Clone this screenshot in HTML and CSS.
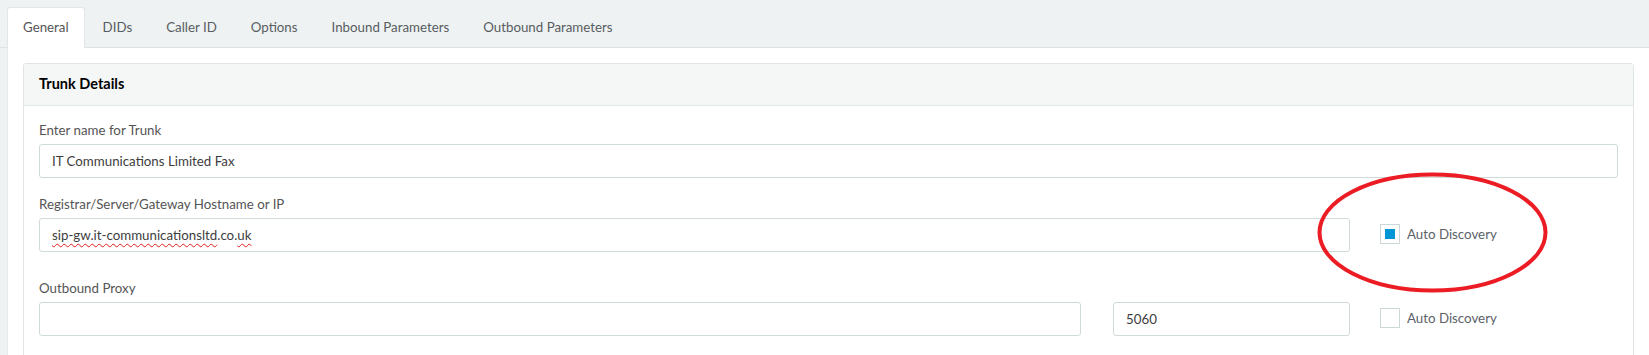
FILE: index.html
```html
<!DOCTYPE html>
<html lang="en">
<head>
<meta charset="utf-8">
<title>Trunk settings</title>
<link rel="stylesheet" href="styles.css">
</head>
<body>
<div class="page">
  <ul class="tabs">
    <li class="tab active">General</li>
    <li class="tab">DIDs</li>
    <li class="tab">Caller ID</li>
    <li class="tab">Options</li>
    <li class="tab">Inbound Parameters</li>
    <li class="tab">Outbound Parameters</li>
  </ul>
  <div class="pane">
    <div class="panel">
      <div class="panel-head">Trunk Details</div>
      <div class="panel-body">
        <div class="group g1">
          <div class="label">Enter name for Trunk</div>
          <div class="input">IT Communications Limited Fax</div>
        </div>
        <div class="row g2">
          <div class="group">
            <div class="label">Registrar/Server/Gateway Hostname or IP</div>
            <div class="input"><span class="misspelt">sip-gw.it-communicationsltd</span>.co.<span class="misspelt">uk</span></div>
          </div>
          <div class="check-wrap">
            <span class="check"><span class="tick"></span></span>
            <span class="check-label">Auto Discovery</span>
          </div>
        </div>
        <div class="row g3">
          <div class="group">
            <div class="label">Outbound Proxy</div>
            <div class="split">
              <div class="input"></div>
              <div class="input">5060</div>
            </div>
          </div>
          <div class="check-wrap">
            <span class="check"></span>
            <span class="check-label">Auto Discovery</span>
          </div>
        </div>
      </div>
    </div>
  </div>
  <svg class="annotation" width="231" height="121" viewBox="0 0 231 121" aria-hidden="true">
    <ellipse cx="115.5" cy="60.5" rx="113" ry="58" fill="none" stroke="#ec1c24" stroke-width="4"/>
  </svg>
</div>
</body>
</html>
```

FILE: styles.css
```css
html, body {
  margin: 0;
  height: 355px;
  overflow: hidden;
}
body {
  background: #eef2f3;
  font-family: Lato, "Open Sans", sans-serif;
  font-size: 13.3px;
  color: #555;
}
.page {
  position: relative;
}
.tabs {
  list-style: none;
  margin: 0;
  padding: 7px 0 0 7px;
  display: flex;
  border-bottom: 1px solid #dde3e4;
  height: 40px;
}
.tab {
  height: 40px;
  line-height: 39px;
  padding: 0 15px;
  margin-right: 2px;
  border: 1px solid transparent;
  border-bottom: none;
  border-radius: 3px 3px 0 0;
  color: #585d61;
  box-sizing: border-box;
}
.tab.active {
  background: #fff;
  border-color: #e1e6e7;
  height: 41px;
  color: #555;
}
.pane {
  margin-left: 7px;
  border-left: 1px solid #e6ebec;
  background: #fff;
  padding: 15px;
}
.panel {
  border: 1px solid #dfe5e6;
  border-radius: 3px;
}
.panel-head {
  background: #f5f7f7;
  border-bottom: 1px solid #e3e8e8;
  padding: 10px 15px 11px;
  line-height: 20px;
  font-size: 14.5px;
  font-weight: bold;
  color: #000;
}
.panel-body {
  padding: 14px 15px 60px;
}
.label {
  line-height: 20px;
  margin-bottom: 4px;
  color: #555;
}
.input {
  height: 34px;
  box-sizing: border-box;
  border: 1px solid #d1dada;
  border-radius: 3px;
  padding: 0 12px;
  line-height: 32px;
  color: #3d3d3d;
}
.misspelt {
  text-decoration: underline wavy #e0201c;
  text-decoration-thickness: 1px;
  text-underline-offset: 3px;
}
.g1 {
  margin-bottom: 16px;
}
.row {
  display: grid;
  grid-template-columns: 1fr 238px;
  column-gap: 30px;
}
.g2 {
  margin-bottom: 26px;
}
.split {
  display: grid;
  grid-template-columns: 1fr 237px;
  column-gap: 32px;
}
.check-wrap {
  align-self: end;
  height: 34px;
  display: flex;
  align-items: center;
  gap: 7px;
  box-sizing: border-box;
  padding-bottom: 3px;
}
.check {
  width: 20px;
  height: 20px;
  box-sizing: border-box;
  border: 1px solid #ccd7d7;
  padding: 4px;
  display: flex;
}
.tick {
  width: 10px;
  height: 10px;
  background: #0096d6;
}
.check-label {
  color: #5b6168;
}
.annotation {
  position: absolute;
  left: 1317px;
  top: 172px;
}
```
